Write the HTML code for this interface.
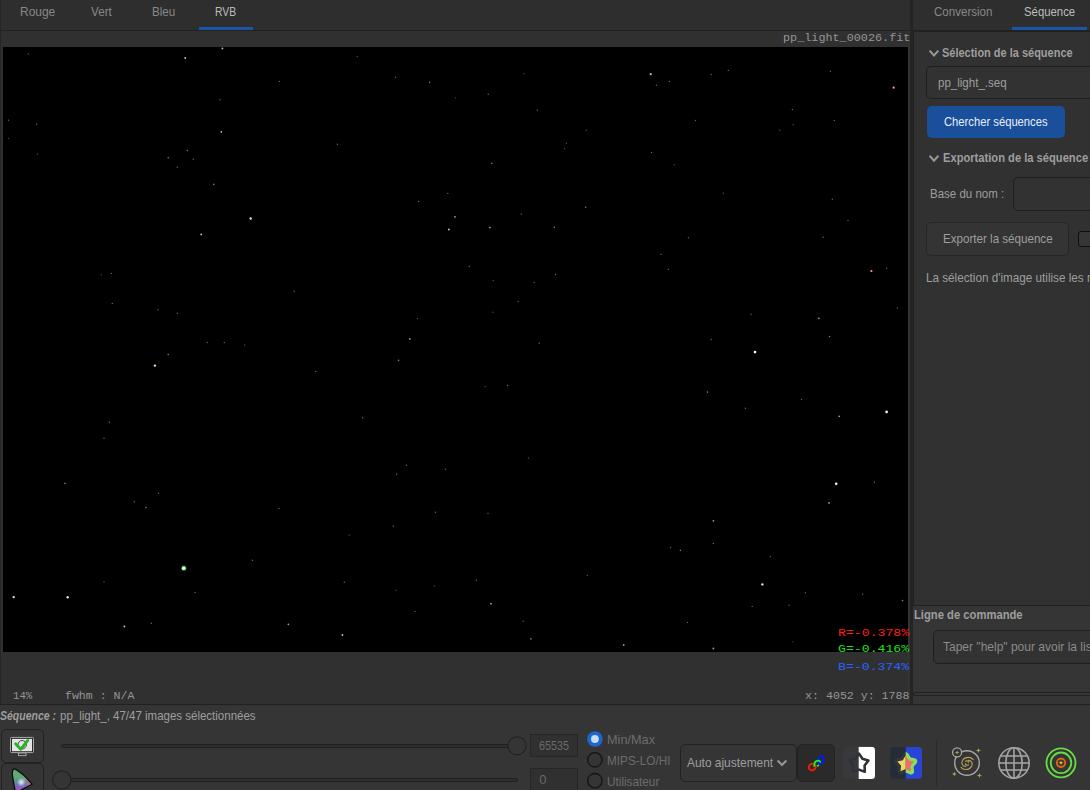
<!DOCTYPE html>
<html><head><meta charset="utf-8">
<style>
*{box-sizing:border-box;margin:0;padding:0}
html,body{width:1090px;height:790px;overflow:hidden;background:#353535;font-family:"Liberation Sans",sans-serif;position:relative}
.a{position:absolute}
.t{position:absolute;white-space:nowrap;line-height:1;transform-origin:0 0}
.m{font-family:"Liberation Mono",monospace}
</style></head><body>
<div class="a" style="left:1px;top:0px;width:909px;height:30px;background:#2e2e2e"></div>
<div class="a" style="left:1px;top:31px;width:909px;height:673px;background:#303030"></div>
<div class="a" style="left:913px;top:0px;width:177px;height:30px;background:#2e2e2e"></div>
<div class="a" style="left:914px;top:32px;width:176px;height:573px;background:#313131"></div>
<div class="a" style="left:0px;top:0px;width:1px;height:704px;background:#262626"></div>
<div class="a" style="left:1px;top:30px;width:909px;height:1px;background:#212121"></div>
<div class="a" style="left:199px;top:27px;width:54px;height:3px;background:#1b56a6"></div>
<div class="a" style="left:3px;top:47px;width:905px;height:605px;background:#000"></div>
<div class="a" style="left:908px;top:31px;width:2px;height:673px;background:#333333"></div>
<div class="a" style="left:910px;top:0px;width:3px;height:704px;background:#242424"></div>
<div class="a" style="left:0px;top:704px;width:1090px;height:1px;background:#212121"></div>
<div class="a" style="left:913px;top:30px;width:177px;height:2px;background:#212121"></div>
<div class="a" style="left:1012px;top:27px;width:75px;height:3px;background:#1b56a6"></div>
<div class="a" style="left:913px;top:32px;width:1px;height:573px;background:#222"></div>
<div class="a" style="left:913px;top:605px;width:177px;height:1px;background:#212121"></div>
<div class="a" style="left:913px;top:692px;width:190px;height:4px;border:1px solid #212121;border-radius:2px;background:#363636"></div>
<div class="a" style="left:926px;top:66px;width:200px;height:33px;border:1px solid #1e1e1e;border-radius:5px;background:#323232"></div>
<div class="a" style="left:926.5px;top:105.7px;width:138px;height:32.6px;border-radius:5px;background:#1a4f9c"></div>
<div class="a" style="left:1013px;top:177px;width:120px;height:34px;border:1px solid #1e1e1e;border-radius:5px;background:#323232"></div>
<div class="a" style="left:926px;top:222px;width:143px;height:34px;border:1px solid #262626;border-radius:5px;background:#343434"></div>
<div class="a" style="left:1078px;top:231px;width:20px;height:16px;border:1.2px solid #0e0e0e;border-radius:3px;background:#363636"></div>
<div class="a" style="left:933px;top:630px;width:200px;height:34px;border:1px solid #1e1e1e;border-radius:5px;background:#323232"></div>
<div class="a" style="left:1px;top:729px;width:43px;height:34px;border:1px solid #222;border-radius:5px;background:#353535"></div>
<div class="a" style="left:1px;top:763px;width:43px;height:34px;border:1px solid #222;border-radius:5px;background:#353535"></div>
<div class="a" style="left:530px;top:734px;width:48px;height:23px;border:1px solid #262626;background:#303030"></div>
<div class="a" style="left:530px;top:768px;width:48px;height:23px;border:1px solid #262626;background:#303030"></div>
<div class="a" style="left:680px;top:744px;width:117px;height:38px;border:1px solid #222;border-radius:5px;background:#353535"></div>
<div class="a" style="left:797px;top:744px;width:38px;height:38px;border:1px solid #232323;border-radius:5px;background:#2a2a2a"></div>
<div class="a" style="left:936px;top:740px;width:1px;height:46px;background:#2a2a2a"></div>
<svg class="a" style="left:0;top:0" width="1090" height="790" viewBox="0 0 1090 790"><circle cx="183.8" cy="568.2" r="2.6" fill="#20a040" opacity="0.7"/><circle cx="28.3" cy="53.9" r="0.7" fill="#8a9090" opacity="0.7"/><circle cx="185.2" cy="58" r="0.9" fill="#d8e0e8" opacity="0.9"/><circle cx="222.4" cy="48.4" r="0.9" fill="#d8e0e8" opacity="0.9"/><circle cx="279.4" cy="81.4" r="0.7" fill="#8a9090" opacity="0.7"/><circle cx="219.9" cy="99.8" r="0.7" fill="#8a9090" opacity="0.7"/><circle cx="8.5" cy="120.2" r="0.7" fill="#8a9090" opacity="0.7"/><circle cx="36.6" cy="124.3" r="0.7" fill="#8a9090" opacity="0.7"/><circle cx="8.5" cy="138.4" r="0.7" fill="#a05050" opacity="0.7"/><circle cx="37.4" cy="154.3" r="0.7" fill="#a05050" opacity="0.7"/><circle cx="221.3" cy="131.8" r="0.9" fill="#d8e0e8" opacity="0.9"/><circle cx="187.4" cy="150.5" r="0.8" fill="#c89060" opacity="0.8"/><circle cx="168.2" cy="157.7" r="0.8" fill="#c89060" opacity="0.8"/><circle cx="177.2" cy="167.3" r="0.7" fill="#8a9090" opacity="0.7"/><circle cx="193.2" cy="159.3" r="0.7" fill="#8a9090" opacity="0.7"/><circle cx="213.8" cy="184.4" r="0.8" fill="#c89060" opacity="0.8"/><circle cx="250.7" cy="218.5" r="1.2" fill="#ffd8b0" opacity="1.0"/><circle cx="201.2" cy="234.4" r="0.9" fill="#d8e0e8" opacity="0.9"/><circle cx="357.2" cy="56.6" r="0.7" fill="#8a9090" opacity="0.7"/><circle cx="395.5" cy="77.3" r="0.7" fill="#8a9090" opacity="0.7"/><circle cx="429.6" cy="82.2" r="0.8" fill="#c89060" opacity="0.8"/><circle cx="524" cy="73.7" r="0.7" fill="#a05050" opacity="0.7"/><circle cx="455.5" cy="97.9" r="0.7" fill="#a05050" opacity="0.7"/><circle cx="488.2" cy="94.3" r="0.7" fill="#8a9090" opacity="0.7"/><circle cx="537.5" cy="110.3" r="0.7" fill="#8a9090" opacity="0.7"/><circle cx="586.2" cy="130.1" r="0.7" fill="#8a9090" opacity="0.7"/><circle cx="566.4" cy="143.3" r="0.7" fill="#a05050" opacity="0.7"/><circle cx="564.5" cy="148.8" r="0.7" fill="#a05050" opacity="0.7"/><circle cx="337.4" cy="144.2" r="0.7" fill="#8a9090" opacity="0.7"/><circle cx="491.8" cy="163.2" r="0.8" fill="#c89060" opacity="0.8"/><circle cx="418.6" cy="201.4" r="0.7" fill="#8a9090" opacity="0.7"/><circle cx="447.8" cy="193.4" r="0.7" fill="#8a9090" opacity="0.7"/><circle cx="455" cy="216.8" r="0.9" fill="#98a8ff" opacity="0.9"/><circle cx="448.9" cy="229.5" r="0.9" fill="#d8e0e8" opacity="0.9"/><circle cx="489.9" cy="227.6" r="0.9" fill="#98a8ff" opacity="0.9"/><circle cx="521.3" cy="214.1" r="0.7" fill="#8a9090" opacity="0.7"/><circle cx="554.3" cy="227.3" r="0.8" fill="#c89060" opacity="0.8"/><circle cx="585.7" cy="207.2" r="0.8" fill="#c89060" opacity="0.8"/><circle cx="650.7" cy="74.2" r="1.1" fill="#ff9aa8" opacity="1.0"/><circle cx="893.7" cy="87.7" r="1.1" fill="#ff9aa8" opacity="1.0"/><circle cx="711.2" cy="74.5" r="0.7" fill="#8a9090" opacity="0.7"/><circle cx="728.3" cy="70.4" r="0.7" fill="#8a9090" opacity="0.7"/><circle cx="656.4" cy="85.3" r="0.7" fill="#8a9090" opacity="0.7"/><circle cx="669.4" cy="81.4" r="0.7" fill="#8a9090" opacity="0.7"/><circle cx="830.4" cy="71.2" r="0.7" fill="#8a9090" opacity="0.7"/><circle cx="792.4" cy="109.5" r="0.7" fill="#8a9090" opacity="0.7"/><circle cx="834.3" cy="120.5" r="0.7" fill="#8a9090" opacity="0.7"/><circle cx="793.2" cy="124.6" r="0.7" fill="#8a9090" opacity="0.7"/><circle cx="779.8" cy="130.1" r="0.7" fill="#8a9090" opacity="0.7"/><circle cx="695.5" cy="120.5" r="0.7" fill="#8a9090" opacity="0.7"/><circle cx="651.5" cy="152.4" r="0.7" fill="#8a9090" opacity="0.7"/><circle cx="674.3" cy="164.8" r="0.7" fill="#a05050" opacity="0.7"/><circle cx="723.3" cy="193.2" r="0.7" fill="#a05050" opacity="0.7"/><circle cx="832.3" cy="199.2" r="0.7" fill="#8a9090" opacity="0.7"/><circle cx="848" cy="220.4" r="0.7" fill="#8a9090" opacity="0.7"/><circle cx="823.2" cy="237.2" r="0.7" fill="#8a9090" opacity="0.7"/><circle cx="688.4" cy="237.8" r="0.7" fill="#8a9090" opacity="0.7"/><circle cx="154.9" cy="365.6" r="1.2" fill="#ffd8b0" opacity="1.0"/><circle cx="101.3" cy="274.8" r="0.7" fill="#a05050" opacity="0.7"/><circle cx="111.4" cy="273.4" r="0.7" fill="#8a9090" opacity="0.7"/><circle cx="112.3" cy="303.4" r="0.7" fill="#8a9090" opacity="0.7"/><circle cx="158" cy="309.8" r="0.7" fill="#8a9090" opacity="0.7"/><circle cx="177.2" cy="313.3" r="0.7" fill="#8a9090" opacity="0.7"/><circle cx="207.2" cy="342.5" r="0.7" fill="#8a9090" opacity="0.7"/><circle cx="224.3" cy="342.5" r="0.7" fill="#8a9090" opacity="0.7"/><circle cx="244.7" cy="345" r="0.7" fill="#a05050" opacity="0.7"/><circle cx="168.2" cy="354.6" r="0.8" fill="#c89060" opacity="0.8"/><circle cx="109.5" cy="422.3" r="0.7" fill="#8a9090" opacity="0.7"/><circle cx="104" cy="438.3" r="0.7" fill="#8a9090" opacity="0.7"/><circle cx="294.2" cy="291.3" r="0.7" fill="#8a9090" opacity="0.7"/><circle cx="409.8" cy="338.9" r="0.9" fill="#98a8ff" opacity="0.9"/><circle cx="398.5" cy="360.4" r="0.8" fill="#c89060" opacity="0.8"/><circle cx="417.5" cy="318.6" r="0.7" fill="#8a9090" opacity="0.7"/><circle cx="469.3" cy="266.5" r="0.7" fill="#8a9090" opacity="0.7"/><circle cx="493.2" cy="280.6" r="0.7" fill="#8a9090" opacity="0.7"/><circle cx="534.2" cy="282.5" r="0.7" fill="#8a9090" opacity="0.7"/><circle cx="555.4" cy="274.5" r="0.7" fill="#8a9090" opacity="0.7"/><circle cx="518.2" cy="301.5" r="0.7" fill="#8a9090" opacity="0.7"/><circle cx="492.9" cy="312.2" r="0.7" fill="#a05050" opacity="0.7"/><circle cx="539.2" cy="343.3" r="0.7" fill="#8a9090" opacity="0.7"/><circle cx="507.5" cy="385.5" r="0.7" fill="#8a9090" opacity="0.7"/><circle cx="485.2" cy="386.6" r="0.7" fill="#8a9090" opacity="0.7"/><circle cx="315.7" cy="371.4" r="0.7" fill="#8a9090" opacity="0.7"/><circle cx="362.5" cy="417.7" r="0.7" fill="#8a9090" opacity="0.7"/><circle cx="755" cy="352.1" r="1.3" fill="#ffffff" opacity="1.0"/><circle cx="886.6" cy="411.9" r="1.3" fill="#ffffff" opacity="1.0"/><circle cx="871.4" cy="271" r="1.1" fill="#ff9aa8" opacity="1.0"/><circle cx="818.8" cy="318.3" r="0.9" fill="#98a8ff" opacity="0.9"/><circle cx="829.6" cy="336.5" r="0.8" fill="#c89060" opacity="0.8"/><circle cx="711.2" cy="339.5" r="0.7" fill="#8a9090" opacity="0.7"/><circle cx="751.1" cy="314.2" r="0.7" fill="#8a9090" opacity="0.7"/><circle cx="745.4" cy="408.3" r="0.7" fill="#8a9090" opacity="0.7"/><circle cx="707.4" cy="392.1" r="0.8" fill="#c89060" opacity="0.8"/><circle cx="801.5" cy="399.5" r="0.7" fill="#8a9090" opacity="0.7"/><circle cx="897.3" cy="308.1" r="0.7" fill="#8a9090" opacity="0.7"/><circle cx="839.2" cy="416.3" r="0.9" fill="#98a8ff" opacity="0.9"/><circle cx="661.1" cy="254.4" r="0.7" fill="#8a9090" opacity="0.7"/><circle cx="668.3" cy="269.3" r="0.7" fill="#8a9090" opacity="0.7"/><circle cx="886.6" cy="268.2" r="0.7" fill="#8a9090" opacity="0.7"/><circle cx="183.8" cy="568.2" r="1.9" fill="#d8ffd8" opacity="1.0"/><circle cx="13.7" cy="597.1" r="1.2" fill="#ffd8b0" opacity="1.0"/><circle cx="67.7" cy="597.3" r="1.2" fill="#ffd8b0" opacity="1.0"/><circle cx="124.4" cy="626.5" r="0.9" fill="#d8e0e8" opacity="0.9"/><circle cx="288.4" cy="624.3" r="0.9" fill="#98a8ff" opacity="0.9"/><circle cx="64.9" cy="483.4" r="0.8" fill="#c89060" opacity="0.8"/><circle cx="134.3" cy="501.8" r="0.7" fill="#8a9090" opacity="0.7"/><circle cx="145.9" cy="507.6" r="0.8" fill="#c89060" opacity="0.8"/><circle cx="279.1" cy="508.4" r="0.7" fill="#8a9090" opacity="0.7"/><circle cx="252.4" cy="560.2" r="0.7" fill="#8a9090" opacity="0.7"/><circle cx="158.5" cy="493.3" r="0.7" fill="#8a9090" opacity="0.7"/><circle cx="104" cy="581.9" r="0.7" fill="#8a9090" opacity="0.7"/><circle cx="195.1" cy="592.4" r="0.7" fill="#8a9090" opacity="0.7"/><circle cx="151.4" cy="623.2" r="0.7" fill="#8a9090" opacity="0.7"/><circle cx="342.4" cy="635" r="0.9" fill="#d8e0e8" opacity="0.9"/><circle cx="530.9" cy="638.9" r="0.8" fill="#c89060" opacity="0.8"/><circle cx="445.3" cy="469.3" r="0.7" fill="#8a9090" opacity="0.7"/><circle cx="406.5" cy="465.2" r="0.7" fill="#8a9090" opacity="0.7"/><circle cx="396.6" cy="474.3" r="0.7" fill="#8a9090" opacity="0.7"/><circle cx="528.4" cy="458.1" r="0.7" fill="#8a9090" opacity="0.7"/><circle cx="435.4" cy="512.3" r="0.7" fill="#8a9090" opacity="0.7"/><circle cx="488" cy="513.4" r="0.7" fill="#8a9090" opacity="0.7"/><circle cx="349.2" cy="535.1" r="0.7" fill="#8a9090" opacity="0.7"/><circle cx="393.3" cy="526.3" r="0.7" fill="#8a9090" opacity="0.7"/><circle cx="344.3" cy="582.2" r="0.7" fill="#8a9090" opacity="0.7"/><circle cx="396" cy="590.2" r="0.7" fill="#a05050" opacity="0.7"/><circle cx="434.3" cy="586" r="0.7" fill="#a05050" opacity="0.7"/><circle cx="491" cy="603.7" r="0.9" fill="#98a8ff" opacity="0.9"/><circle cx="415" cy="611.4" r="0.7" fill="#8a9090" opacity="0.7"/><circle cx="523.2" cy="621.3" r="0.7" fill="#8a9090" opacity="0.7"/><circle cx="476.4" cy="580.3" r="0.7" fill="#8a9090" opacity="0.7"/><circle cx="587.3" cy="575.6" r="0.7" fill="#8a9090" opacity="0.7"/><circle cx="836.2" cy="483.7" r="1.3" fill="#ffffff" opacity="1.0"/><circle cx="762.4" cy="584.4" r="1.2" fill="#ffd8b0" opacity="1.0"/><circle cx="829" cy="502.9" r="0.9" fill="#98a8ff" opacity="0.9"/><circle cx="713.4" cy="520.8" r="0.9" fill="#98a8ff" opacity="0.9"/><circle cx="680.4" cy="550.3" r="0.8" fill="#c89060" opacity="0.8"/><circle cx="670.5" cy="547.5" r="0.7" fill="#8a9090" opacity="0.7"/><circle cx="713.4" cy="543.4" r="0.7" fill="#8a9090" opacity="0.7"/><circle cx="770.4" cy="556.6" r="0.7" fill="#8a9090" opacity="0.7"/><circle cx="687.5" cy="622.4" r="0.7" fill="#8a9090" opacity="0.7"/><circle cx="752.2" cy="606.4" r="0.7" fill="#8a9090" opacity="0.7"/><circle cx="789.1" cy="605.3" r="0.7" fill="#8a9090" opacity="0.7"/><circle cx="805.4" cy="592.7" r="0.7" fill="#8a9090" opacity="0.7"/><circle cx="862.6" cy="594.3" r="0.7" fill="#8a9090" opacity="0.7"/><circle cx="874.4" cy="482.3" r="0.7" fill="#8a9090" opacity="0.7"/><circle cx="793" cy="641.9" r="0.7" fill="#a05050" opacity="0.7"/><circle cx="623.7" cy="645" r="0.9" fill="#98a8ff" opacity="0.9"/><circle cx="713.4" cy="648.5" r="0.9" fill="#98a8ff" opacity="0.9"/><circle cx="902.5" cy="600.6" r="0.8" fill="#c89060" opacity="0.8"/><polyline points="929.6,50.6 934,55.4 938.4,50.6" fill="none" stroke="#969696" stroke-width="2.1"/><polyline points="929.6,155.8 934,160.6 938.4,155.8" fill="none" stroke="#969696" stroke-width="2.1"/><polyline points="777.6,760.4 782,765 786.4,760.4" fill="none" stroke="#969696" stroke-width="2.1"/><rect x="61.6" y="744.5" width="456" height="3" rx="1.5" fill="#2f2f2f" stroke="#202020" stroke-width="1"/><circle cx="517" cy="745.8" r="9.1" fill="#353535" stroke="#222222" stroke-width="1.1"/><rect x="62" y="778.5" width="455.5" height="3" rx="1.5" fill="#2f2f2f" stroke="#202020" stroke-width="1"/><circle cx="61.8" cy="779.9" r="9.1" fill="#353535" stroke="#222222" stroke-width="1.1"/><circle cx="594.9" cy="739" r="7.85" fill="#1c66d0"/><circle cx="594.9" cy="739" r="3.9" fill="#c8dcf8"/><circle cx="594.9" cy="759.8" r="7.2" fill="none" stroke="#141414" stroke-width="1.3"/><circle cx="594.9" cy="780.7" r="7.2" fill="none" stroke="#141414" stroke-width="1.3"/><rect x="10.5" y="737.4" width="23" height="15.2" rx="1" fill="#2a2a2a" stroke="#a8a8a8" stroke-width="1"/><rect x="12" y="738.9" width="20" height="12.3" fill="#e4e4e4"/><rect x="18.5" y="753" width="7.5" height="2.6" fill="none" stroke="#a0a0a0" stroke-width="1"/><circle cx="22.2" cy="744.7" r="4.2" fill="none" stroke="#303030" stroke-width="0.9"/><polyline points="15.6,743.8 20.8,749.2 27.8,740.4" fill="none" stroke="#22b422" stroke-width="2.8" stroke-linecap="round" stroke-linejoin="round"/><defs><linearGradient id="gtri" x1="0" y1="0" x2="0.15" y2="1"><stop offset="0" stop-color="#58b060"/><stop offset="0.45" stop-color="#60a878"/><stop offset="0.8" stop-color="#5878c0"/><stop offset="1" stop-color="#8050c8"/></linearGradient><radialGradient id="gpk" cx="32" cy="784" r="9" gradientUnits="userSpaceOnUse"><stop offset="0" stop-color="#d06070" stop-opacity="0.95"/><stop offset="1" stop-color="#d06070" stop-opacity="0"/></radialGradient><radialGradient id="gpu" cx="19" cy="790" r="7" gradientUnits="userSpaceOnUse"><stop offset="0" stop-color="#b050c0" stop-opacity="0.95"/><stop offset="1" stop-color="#b050c0" stop-opacity="0"/></radialGradient><radialGradient id="gy" cx="27" cy="777" r="5" gradientUnits="userSpaceOnUse"><stop offset="0" stop-color="#c0b060" stop-opacity="0.8"/><stop offset="1" stop-color="#c0b060" stop-opacity="0"/></radialGradient><radialGradient id="gw" cx="21.3" cy="782.2" r="4.5" gradientUnits="userSpaceOnUse"><stop offset="0" stop-color="#f4f0f8" stop-opacity="1"/><stop offset="1" stop-color="#f4f0f8" stop-opacity="0"/></radialGradient><clipPath id="ctri"><path d="M14,768.6 C12,770 12,774 12.8,778 L15.5,793 L32.1,784.2 C27,778 20,771 14,768.6 Z"/></clipPath></defs><g clip-path="url(#ctri)"><rect x="10" y="766" width="25" height="26" fill="url(#gtri)"/><rect x="10" y="766" width="25" height="26" fill="url(#gy)"/><rect x="10" y="766" width="25" height="26" fill="url(#gpk)"/><rect x="10" y="766" width="25" height="26" fill="url(#gpu)"/><rect x="10" y="766" width="25" height="26" fill="url(#gw)"/></g><path d="M14,768.6 C12,770 12,774 12.8,778 L15.5,793 L32.1,784.2 C27,778 20,771 14,768.6 Z" fill="none" stroke="#0c0c0c" stroke-width="1.3" stroke-linejoin="round"/><ellipse cx="812.3" cy="767" rx="3.6" ry="3.2" transform="rotate(-25 812.3 767)" fill="none" stroke="#ff1a00" stroke-width="1.8"/><ellipse cx="820.8" cy="759.9" rx="2.5" ry="4.1" transform="rotate(25 820.8 759.9)" fill="none" stroke="#0018ff" stroke-width="2"/><path d="M814.4,766.8 C814,763.4 815.4,761 817.8,760.7 C819.4,760.5 820.4,761.4 820.2,762.6" fill="none" stroke="#10ff10" stroke-width="1.7"/><line x1="817.2" y1="766.2" x2="819" y2="764.9" stroke="#10ff10" stroke-width="1.7"/><defs><clipPath id="c1"><rect x="843" y="746.7" width="32" height="32.3" rx="3.5"/></clipPath><clipPath id="c2"><rect x="890.4" y="747" width="31.5" height="31.8" rx="3.5"/></clipPath><clipPath id="cl"><rect x="0" y="0" width="905.7" height="790"/></clipPath><clipPath id="cr"><rect x="905.7" y="0" width="200" height="790"/></clipPath></defs><g clip-path="url(#c1)"><rect x="843" y="746.7" width="16" height="32.3" fill="#38393c"/><rect x="858.7" y="746.7" width="17" height="32.3" fill="#ffffff"/></g><polygon points="858.90,753.60 862.43,758.75 868.41,760.51 864.61,765.45 864.78,771.69 858.90,769.60 853.02,771.69 853.19,765.45 849.39,760.51 855.37,758.75" fill="none" stroke="#313235" stroke-width="2.6" stroke-linejoin="round"/><g clip-path="url(#c2)"><rect x="889.9" y="746.7" width="16" height="32.3" fill="#242c38"/><rect x="905.7" y="746.7" width="17" height="32.3" fill="#2a44da"/></g><g clip-path="url(#cl)"><polygon points="905.70,755.40 908.58,760.24 914.07,761.48 910.36,765.71 910.87,771.32 905.70,769.10 900.53,771.32 901.04,765.71 897.33,761.48 902.82,760.24" fill="#343537" stroke="#343537" stroke-width="6.4" stroke-linejoin="round"/><polygon points="905.70,755.40 908.58,760.24 914.07,761.48 910.36,765.71 910.87,771.32 905.70,769.10 900.53,771.32 901.04,765.71 897.33,761.48 902.82,760.24" fill="#e8d868"/></g><g clip-path="url(#cr)"><polygon points="905.70,755.40 908.58,760.24 914.07,761.48 910.36,765.71 910.87,771.32 905.70,769.10 900.53,771.32 901.04,765.71 897.33,761.48 902.82,760.24" fill="#84e254" stroke="#84e254" stroke-width="6.4" stroke-linejoin="round"/><polygon points="905.70,755.40 908.58,760.24 914.07,761.48 910.36,765.71 910.87,771.32 905.70,769.10 900.53,771.32 901.04,765.71 897.33,761.48 902.82,760.24" fill="#f06c6c"/></g><circle cx="967" cy="763" r="12.3" fill="none" stroke="#a8a8a8" stroke-width="1.4"/><circle cx="957.1" cy="752.4" r="4.5" fill="#333333" stroke="#a8a8a8" stroke-width="1.3"/><path d="M957.10,749.80 Q957.10,752.40 959.70,752.40 Q957.10,752.40 957.10,755.00 Q957.10,752.40 954.50,752.40 Q957.10,752.40 957.10,749.80 Z" fill="#b0a058"/><path d="M978.40,747.60 Q978.40,750.60 981.40,750.60 Q978.40,750.60 978.40,753.60 Q978.40,750.60 975.40,750.60 Q978.40,750.60 978.40,747.60 Z" fill="#b0a058"/><path d="M954.30,771.10 Q954.30,774.10 957.30,774.10 Q954.30,774.10 954.30,777.10 Q954.30,774.10 951.30,774.10 Q954.30,774.10 954.30,771.10 Z" fill="#b0a058"/><path d="M979.40,772.40 Q979.40,775.40 982.40,775.40 Q979.40,775.40 979.40,778.40 Q979.40,775.40 976.40,775.40 Q979.40,775.40 979.40,772.40 Z" fill="#b0a058"/><g fill="none" stroke="#b0a058" stroke-width="1.1" stroke-linecap="round"><path d="M973.2,759.6 C971,756.6 965,756.4 962.6,760.2 C960.8,763.2 962.6,766.6 965.8,766.4"/><path d="M961,767.4 C963.2,770.2 969.2,770.4 971.4,766.6 C973.2,763.6 971.4,760.2 968.2,760.4"/><path d="M965.4,761.2 C966.8,760.4 968.4,761 968.6,762.4 M968.6,764.8 C967.2,765.6 965.6,765 965.4,763.6"/></g><g fill="none" stroke="#a3a3a3" stroke-width="1.6"><circle cx="1014" cy="763" r="15.2"/><ellipse cx="1014" cy="763" rx="8.2" ry="15.2"/><line x1="1014" y1="747.8" x2="1014" y2="778.2"/><line x1="998.8" y1="763" x2="1029.2" y2="763"/><line x1="1000.8" y1="756" x2="1027.2" y2="756"/><line x1="1000.8" y1="770" x2="1027.2" y2="770"/></g><g fill="none"><circle cx="1061" cy="762.8" r="14.5" stroke="#66dd44" stroke-width="1.8"/><circle cx="1061" cy="762.8" r="10.3" stroke="#66dd44" stroke-width="1.8"/><circle cx="1061" cy="762.8" r="4.2" stroke="#f06412" stroke-width="1.8"/></g><path d="M1061.00,760.00 Q1061.00,762.80 1063.80,762.80 Q1061.00,762.80 1061.00,765.60 Q1061.00,762.80 1058.20,762.80 Q1061.00,762.80 1061.00,760.00 Z" fill="#f8c810"/></svg>
<div class="t" id="t0" style="left:20.31px;top:4.57px;font-size:13.5px;color:#888888;transform:scaleX(0.8857);">Rouge</div>
<div class="t" id="t1" style="left:91.00px;top:4.57px;font-size:13.5px;color:#888888;transform:scaleX(0.8655);">Vert</div>
<div class="t" id="t2" style="left:151.84px;top:4.57px;font-size:13.5px;color:#888888;transform:scaleX(0.8623);">Bleu</div>
<div class="t" id="t3" style="left:214.83px;top:4.57px;font-size:13.5px;color:#bdbdbd;transform:scaleX(0.7658);">RVB</div>
<div class="t" id="t4" style="left:933.50px;top:4.57px;font-size:13.5px;color:#888888;transform:scaleX(0.8558);">Conversion</div>
<div class="t" id="t5" style="left:1024.30px;top:4.57px;font-size:13.5px;color:#bdbdbd;transform:scaleX(0.8409);">Séquence</div>
<div class="t" id="t6" style="left:942.30px;top:45.77px;font-size:13.5px;color:#9e9e9e;font-weight:bold;transform:scaleX(0.8134);">Sélection de la séquence</div>
<div class="t" id="t7" style="left:938.30px;top:76.00px;font-size:13px;color:#9e9e9e;transform:scaleX(0.8870);">pp_light_.seq</div>
<div class="t" id="t8" style="left:943.90px;top:115.00px;font-size:13px;color:#e8eef8;transform:scaleX(0.8634);">Chercher séquences</div>
<div class="t" id="t9" style="left:942.50px;top:150.57px;font-size:13.5px;color:#9e9e9e;font-weight:bold;transform:scaleX(0.8265);">Exportation de la séquence</div>
<div class="t" id="t10" style="left:929.72px;top:186.70px;font-size:13px;color:#9e9e9e;transform:scaleX(0.8843);">Base du nom :</div>
<div class="t" id="t11" style="left:942.61px;top:231.70px;font-size:13px;color:#9e9e9e;transform:scaleX(0.8921);">Exporter la séquence</div>
<div class="t" id="t12" style="left:925.70px;top:271.00px;font-size:13px;color:#9e9e9e;transform:scaleX(0.8999);">La sélection d'image utilise les r</div>
<div class="t" id="t13" style="left:913.80px;top:607.57px;font-size:13.5px;color:#9e9e9e;font-weight:bold;transform:scaleX(0.8320);">Ligne de commande</div>
<div class="t" id="t14" style="left:942.90px;top:640.00px;font-size:13px;color:#8a8a8a;transform:scaleX(0.9235);">Taper "help" pour avoir la liste</div>
<div class="t" id="t15" style="left:0.00px;top:709.00px;font-size:13px;color:#9e9e9e;font-weight:bold;font-style:italic;transform:scaleX(0.8069);">Séquence :</div>
<div class="t" id="t16" style="left:59.50px;top:709.00px;font-size:13px;color:#9e9e9e;transform:scaleX(0.8843);">pp_light_, 47/47 images sélectionnées</div>
<div class="t" id="t17" style="left:606.52px;top:733.00px;font-size:13px;color:#6c6c6c;transform:scaleX(0.9770);">Min/Max</div>
<div class="t" id="t18" style="left:606.59px;top:754.30px;font-size:13px;color:#6c6c6c;transform:scaleX(0.9057);">MIPS-LO/HI</div>
<div class="t" id="t19" style="left:606.60px;top:774.50px;font-size:13px;color:#6c6c6c;transform:scaleX(0.9049);">Utilisateur</div>
<div class="t" id="t20" style="left:687.30px;top:756.00px;font-size:13px;color:#9e9e9e;transform:scaleX(0.9170);">Auto ajustement</div>
<div class="t" id="t21" style="left:539.30px;top:739.00px;font-size:13px;color:#6a6a6a;transform:scaleX(0.8268);">65535</div>
<div class="t" id="t22" style="left:539.30px;top:772.60px;font-size:13px;color:#6a6a6a;">0</div>
<div class="t m" id="t23" style="left:782.98px;top:31.81px;font-size:11.6px;color:#959595;transform:scaleX(1.0172);">pp_light_00026.fit</div>
<div class="t m" id="t24" style="left:838.30px;top:627.66px;font-size:11.8px;color:#ff1a1a;transform:scaleX(1.1171);">R=-0.378%</div>
<div class="t m" id="t25" style="left:838.30px;top:644.46px;font-size:11.8px;color:#1ee01e;transform:scaleX(1.1171);">G=-0.416%</div>
<div class="t m" id="t26" style="left:838.30px;top:661.66px;font-size:11.8px;color:#2a62ff;transform:scaleX(1.1171);">B=-0.374%</div>
<div class="t m" id="t27" style="left:12.90px;top:689.91px;font-size:11.6px;color:#959595;transform:scaleX(0.9180);">14%</div>
<div class="t m" id="t28" style="left:64.50px;top:689.91px;font-size:11.6px;color:#959595;transform:scaleX(0.9969);">fwhm : N/A</div>
<div class="t m" id="t29" style="left:805.10px;top:689.91px;font-size:11.6px;color:#959595;">x: 4052 y: 1788</div>
</body></html>
